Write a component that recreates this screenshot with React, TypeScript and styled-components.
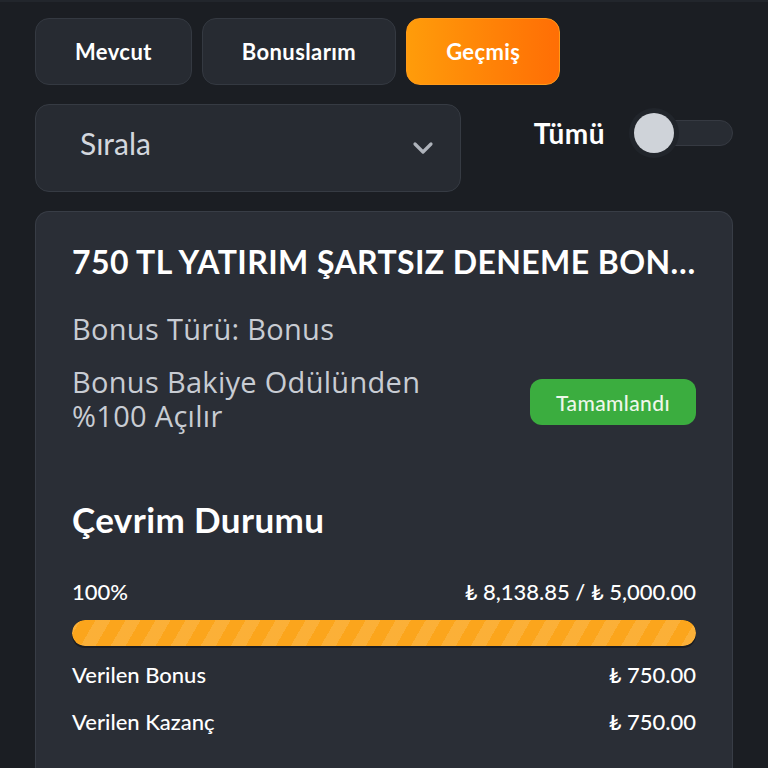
import styled, { createGlobalStyle } from 'styled-components';

const GlobalStyle = createGlobalStyle`
   html, body {
      margin: 0;
      padding: 0;
      background: #1b1e23;
   }
   body {
      font-family: 'Lato', 'Noto Sans', sans-serif;
      color: #ffffff;
   }
   * {
      box-sizing: border-box;
   }
`;

const Page = styled.main`
   width: 768px;
   height: 768px;
   overflow: hidden;
   padding: 16px 35px 0 35px;
   border-top: 2px solid #22262c;
   display: flex;
   flex-direction: column;
`;

const Tabs = styled.nav`
   display: flex;
   gap: 10px;
`;

const Tab = styled.button<{ $active?: boolean }>`
   height: 67px;
   padding: 0 39px;
   border-radius: 14px;
   font-family: 'Lato', sans-serif;
   font-size: 22px;
   font-weight: 700;
   letter-spacing: 0.4px;
   color: #ffffff;
   border: 1px solid ${(p) => (p.$active ? '#ff9a1a' : '#343941')};
   background: ${(p) =>
      p.$active ? 'linear-gradient(90deg, #ff9c0a 0%, #ff6e05 100%)' : '#272b32'};
`;

const FilterRow = styled.div`
   display: flex;
   align-items: center;
   margin-top: 19px;
   height: 88px;
`;

const Select = styled.div`
   width: 426px;
   height: 88px;
   border-radius: 14px;
   background: #272b32;
   border: 1px solid #363b43;
   display: flex;
   align-items: center;
   justify-content: space-between;
   padding: 0 26px 10px 44px;
   font-size: 30px;
   color: #d3d7de;
`;

const Arrow = styled.span`
   padding-top: 10px;
   display: flex;
`;

const ToggleWrap = styled.div`
   display: flex;
   align-items: center;
   margin-left: 73px;
   margin-top: -30px;
   gap: 30px;
`;

const ToggleLabel = styled.span`
   font-size: 28px;
   font-weight: 700;
   letter-spacing: 0.5px;
   color: #ffffff;
`;

const Track = styled.div`
   position: relative;
   width: 98px;
   height: 26px;
   border-radius: 13px;
   background: #282c33;
   border: 1px solid #363a42;
`;

const Knob = styled.span`
   position: absolute;
   left: -2px;
   top: 50%;
   width: 40px;
   height: 40px;
   transform: translateY(-50%);
   border-radius: 50%;
   background: #cfd3d9;
   box-shadow: 0 0 0 5px #21252b;
`;

const Card = styled.section`
   margin-top: 19px;
   flex: 1;
   background: #2a2e36;
   border: 1px solid #383d46;
   border-bottom: none;
   border-radius: 14px 14px 0 0;
   padding: 28px 36px 0 36px;
   display: flex;
   flex-direction: column;
`;

const Title = styled.h1`
   margin: 0;
   font-size: 32px;
   font-weight: 700;
   line-height: 44px;
   letter-spacing: 0.4px;
   white-space: nowrap;
   overflow: hidden;
   text-overflow: ellipsis;
`;

const Info = styled.p<{ $top?: number }>`
   margin: ${(p) => p.$top ?? 0}px 0 0 0;
   font-family: 'Open Sans', sans-serif;
   font-size: 29px;
   font-weight: 400;
   line-height: 34px;
   letter-spacing: 0.3px;
   color: #c8ccd3;
`;

const InfoRow = styled.div`
   display: flex;
   align-items: center;
   justify-content: space-between;
   margin-top: 19px;
`;

const Badge = styled.span`
   height: 46px;
   padding: 0 26px;
   border-radius: 12px;
   background: #3bad3f;
   display: flex;
   align-items: center;
   font-size: 21px;
   font-weight: 500;
   letter-spacing: 0.4px;
   color: #eef7ea;
   transform: translateY(3px);
`;

const Heading = styled.h2`
   margin: 64px 0 0 0;
   font-size: 35px;
   font-weight: 700;
   line-height: 44px;
   letter-spacing: 0.4px;
`;

const StatRow = styled.div<{ $gap: number }>`
   display: flex;
   justify-content: space-between;
   align-items: center;
   margin-top: ${(p) => p.$gap}px;
   font-size: 22px;
   font-weight: 500;
   line-height: 28px;
   color: #ffffff;
`;

const Bar = styled.div`
   margin-top: 14px;
   height: 26px;
   border-radius: 13px;
   background: #1e2126;
   overflow: hidden;
   box-shadow: 0 2px 0 #1b1d21;
`;

const Fill = styled.div`
   height: 100%;
   border-radius: 13px;
   background-color: #fba51c;
   background-image: repeating-linear-gradient(
      -60deg,
      rgba(255, 255, 255, 0.12) 0 13px,
      rgba(255, 255, 255, 0) 13px 26px
   );
`;

const Chevron = () => (
   <svg width='22' height='14' viewBox='0 0 22 14' fill='none'>
      <path d='M3 3l8 8 8-8' stroke='#aeb3bb' strokeWidth='3.2' strokeLinecap='round' strokeLinejoin='round' />
   </svg>
);

const progress = 100;

const App = () => {
   return (
      <>
         <GlobalStyle />
         <Page>
            <Tabs>
               <Tab>Mevcut</Tab>
               <Tab>Bonuslarım</Tab>
               <Tab $active>Geçmiş</Tab>
            </Tabs>
            <FilterRow>
               <Select>
                  Sırala
                  <Arrow>
                     <Chevron />
                  </Arrow>
               </Select>
               <ToggleWrap>
                  <ToggleLabel>Tümü</ToggleLabel>
                  <Track>
                     <Knob />
                  </Track>
               </ToggleWrap>
            </FilterRow>
            <Card>
               <Title>750 TL YATIRIM ŞARTSIZ DENEME BONUSU</Title>
               <Info $top={28}>Bonus Türü: Bonus</Info>
               <InfoRow>
                  <Info>
                     Bonus Bakiye Odülünden
                     <br />
                     %100 Açılır
                  </Info>
                  <Badge>Tamamlandı</Badge>
               </InfoRow>
               <Heading>Çevrim Durumu</Heading>
               <StatRow $gap={37}>
                  <span>100%</span>
                  <span>₺ 8,138.85 / ₺ 5,000.00</span>
               </StatRow>
               <Bar>
                  <Fill style={{ width: `${progress}%` }} />
               </Bar>
               <StatRow $gap={15}>
                  <span>Verilen Bonus</span>
                  <span>₺ 750.00</span>
               </StatRow>
               <StatRow $gap={19}>
                  <span>Verilen Kazanç</span>
                  <span>₺ 750.00</span>
               </StatRow>
            </Card>
         </Page>
      </>
   );
};

export default App;
